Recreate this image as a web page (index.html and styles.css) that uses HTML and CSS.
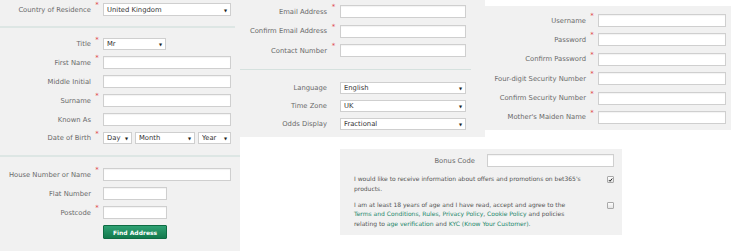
FILE: index.html
```html
<!DOCTYPE html>
<html lang="en">

<head>
    <meta charset="UTF-8">
    <meta name="viewport" content="width=device-width, initial-scale=1.0">
    <title>Open Account</title>
    <link rel="stylesheet" href="styles.css">
</head>

<body>
    <div class="page">

        <!-- Personal details -->
        <section class="panel panel-personal">
            <div class="group group-country">
                <div class="row">
                    <label>Country of Residence</label><span class="req">*</span>
                    <div class="select wide tall"><select><option>United Kingdom</option></select></div>
                </div>
            </div>
            <div class="group group-name">
                <div class="row">
                    <label>Title</label><span class="req">*</span>
                    <div class="select title"><select><option>Mr</option></select></div>
                </div>
                <div class="row">
                    <label>First Name</label><span class="req">*</span>
                    <input type="text" class="field wide">
                </div>
                <div class="row">
                    <label>Middle Initial</label><span class="req"></span>
                    <input type="text" class="field wide">
                </div>
                <div class="row">
                    <label>Surname</label><span class="req">*</span>
                    <input type="text" class="field wide">
                </div>
                <div class="row">
                    <label>Known As</label><span class="req"></span>
                    <input type="text" class="field wide">
                </div>
                <div class="row">
                    <label>Date of Birth</label><span class="req">*</span>
                    <div class="dob">
                        <div class="select day"><select><option>Day</option></select></div>
                        <div class="select month"><select><option>Month</option></select></div>
                        <div class="select year"><select><option>Year</option></select></div>
                    </div>
                </div>
            </div>
            <div class="group group-address">
                <div class="row">
                    <label>House Number or Name</label><span class="req">*</span>
                    <input type="text" class="field wide">
                </div>
                <div class="row">
                    <label>Flat Number</label><span class="req"></span>
                    <input type="text" class="field short">
                </div>
                <div class="row">
                    <label>Postcode</label><span class="req">*</span>
                    <input type="text" class="field short">
                </div>
                <div class="row">
                    <span></span><span></span>
                    <button class="find-btn">Find Address</button>
                </div>
            </div>
        </section>

        <!-- Contact details and preferences -->
        <section class="panel panel-contact">
            <div class="group group-email">
                <div class="row">
                    <label>Email Address</label><span class="req">*</span>
                    <input type="text" class="field mid">
                </div>
                <div class="row">
                    <label>Confirm Email Address</label><span class="req">*</span>
                    <input type="text" class="field mid">
                </div>
                <div class="row">
                    <label>Contact Number</label><span class="req">*</span>
                    <input type="text" class="field mid">
                </div>
            </div>
            <div class="group group-prefs">
                <div class="row">
                    <label>Language</label><span class="req"></span>
                    <div class="select mid"><select><option>English</option></select></div>
                </div>
                <div class="row">
                    <label>Time Zone</label><span class="req"></span>
                    <div class="select mid"><select><option>UK</option></select></div>
                </div>
                <div class="row">
                    <label>Odds Display</label><span class="req"></span>
                    <div class="select mid"><select><option>Fractional</option></select></div>
                </div>
            </div>
        </section>

        <!-- Login and security -->
        <section class="panel panel-account">
            <div class="row">
                <label>Username</label><span class="req">*</span>
                <input type="text" class="field wide">
            </div>
            <div class="row">
                <label>Password</label><span class="req">*</span>
                <input type="password" class="field wide">
            </div>
            <div class="row">
                <label>Confirm Password</label><span class="req">*</span>
                <input type="password" class="field wide">
            </div>
            <div class="row">
                <label>Four-digit Security Number</label><span class="req">*</span>
                <input type="text" class="field wide">
            </div>
            <div class="row">
                <label>Confirm Security Number</label><span class="req">*</span>
                <input type="text" class="field wide">
            </div>
            <div class="row">
                <label>Mother's Maiden Name</label><span class="req">*</span>
                <input type="text" class="field wide">
            </div>
        </section>

        <!-- Bonus code and agreements -->
        <section class="panel panel-bonus">
            <div class="row">
                <label>Bonus Code</label><span class="req"></span>
                <input type="text" class="field bonus">
            </div>
            <div class="agree">
                <p>I would like to receive information about offers and promotions on bet365's products.</p>
                <span class="check checked">
                    <svg viewBox="0 0 8 8" width="6" height="6"><path d="M1.5 4.2 L3.3 6 L6.8 1.6" fill="none" stroke="#222" stroke-width="1.6"/></svg>
                </span>
            </div>
            <div class="agree">
                <p>I am at least 18 years of age and I have read, accept and agree to the<br>
                    <a href="#">Terms and Conditions</a>, <a href="#">Rules</a>, <a href="#">Privacy Policy</a>,
                    <a href="#">Cookie Policy</a> and policies<br>
                    relating to <a href="#">age verification</a> and
                    <a href="#">KYC (Know Your Customer)</a>.</p>
                <span class="check"></span>
            </div>
        </section>

    </div>
</body>

</html>
```

FILE: styles.css
```css
body {
    margin: 0;
    background-color: #fff;
    font-family: "DejaVu Sans", Verdana, sans-serif;
    font-size: 6.8px;
    color: #6a6a6a;
}

/* Panels sit on a loose grid */
.page {
    display: grid;
    grid-template-columns: 240px 100px 145px 137px 109px;
    grid-template-rows: 137px 114px;
    width: 731px;
    height: 251px;
}

.panel {
    background-color: #f1f1f1;
    box-sizing: border-box;
}

.panel-personal {
    grid-column: 1;
    grid-row: 1 / 3;
    --label-w: 91px;
}

.panel-contact {
    grid-column: 2 / 4;
    grid-row: 1;
    --label-w: 87px;
}

.panel-account {
    grid-column: 4 / 6;
    grid-row: 1;
    align-self: start;
    margin-top: 6px;
    height: 124px;
    padding-top: 8px;
    display: flex;
    flex-direction: column;
    gap: 6.4px;
    --label-w: 101px;
}

.panel-bonus {
    grid-column: 3 / 5;
    grid-row: 2;
    align-self: start;
    margin-top: 12px;
    height: 86px;
    padding-top: 5px;
    --label-w: 135px;
}

/* Groups with divider lines */
.group {
    display: flex;
    flex-direction: column;
}

.group-country {
    padding: 3px 0 10px;
    margin-right: 5px;
    border-bottom: 2px solid #dde6e4;
}

.group-name {
    padding: 10px 0 11px;
    gap: 6px;
    border-bottom: 2px solid #dde6e4;
}

.group-address {
    padding-top: 11px;
    gap: 6px;
}

.group-email {
    padding: 5px 0 12px;
    gap: 6.5px;
    margin-right: 14px;
    border-bottom: 1px solid #d5e1de;
}

.group-prefs {
    padding-top: 12px;
    gap: 6px;
}

/* Form rows */
.row {
    display: grid;
    grid-template-columns: var(--label-w) 12px auto;
    align-items: center;
}

.panel-contact .row {
    grid-template-columns: var(--label-w) 13px auto;
}

.row label {
    text-align: right;
    white-space: nowrap;
}

.req {
    align-self: start;
    text-align: center;
    color: #e0474c;
    font-size: 7px;
    line-height: 7px;
    margin-top: -1px;
}

.field {
    box-sizing: border-box;
    height: 13px;
    margin: 0;
    padding: 0 3px;
    border: 1px solid #cfcfcf;
    background-color: #fff;
    box-shadow: inset 0 1px 1px rgba(0, 0, 0, 0.05);
    font: 7px "DejaVu Sans", Verdana, sans-serif;
    color: #333;
    outline: none;
}

.wide { width: 128px; }
.mid { width: 126px; }
.short { width: 64px; }
.bonus { width: 127px; }

/* Selects with a small arrow */
.select {
    position: relative;
    height: 12px;
}

.select.tall { height: 13px; }
.select.title { width: 63px; }
.select.day { width: 29px; }
.select.month { width: 60px; }
.select.year { width: 33px; }

.select select {
    appearance: none;
    -webkit-appearance: none;
    box-sizing: border-box;
    width: 100%;
    height: 100%;
    margin: 0;
    padding: 0 3px;
    border: 1px solid #cfcfcf;
    border-radius: 0;
    background-color: #fff;
    font: 6.8px "DejaVu Sans", Verdana, sans-serif;
    color: #333;
}

.select::after {
    content: "\25BC";
    position: absolute;
    right: 4px;
    top: 50%;
    transform: translateY(-50%);
    font-size: 4px;
    color: #222;
    pointer-events: none;
}

.dob {
    display: flex;
    gap: 3px;
}

.find-btn {
    box-sizing: border-box;
    width: 64px;
    height: 14px;
    margin: 0;
    padding: 0;
    border: 1px solid #0e6b43;
    border-radius: 1px;
    background: linear-gradient(#2fa173, #137a4d);
    color: #fff;
    font: bold 6px "DejaVu Sans", Verdana, sans-serif;
    cursor: pointer;
}

/* Agreement checkboxes */
.agree {
    display: grid;
    grid-template-columns: 236px 1fr;
    padding-left: 14px;
    font-size: 6px;
    line-height: 9.5px;
    color: #555;
}

.agree p {
    margin: 0;
}

.panel-bonus .agree:nth-of-type(2) {
    margin-top: 7px;
}

.panel-bonus .agree:nth-of-type(3) {
    margin-top: 6.5px;
}

.agree a {
    color: #24876a;
    text-decoration: none;
}

.check {
    box-sizing: border-box;
    width: 7px;
    height: 7px;
    margin: 2px 0 0 17px;
    border: 1px solid #a9a9a9;
    border-radius: 1px;
    background: linear-gradient(#fdfdfd, #e4e4e4);
    display: flex;
    align-items: center;
    justify-content: center;
}

.check svg {
    display: block;
}
```
